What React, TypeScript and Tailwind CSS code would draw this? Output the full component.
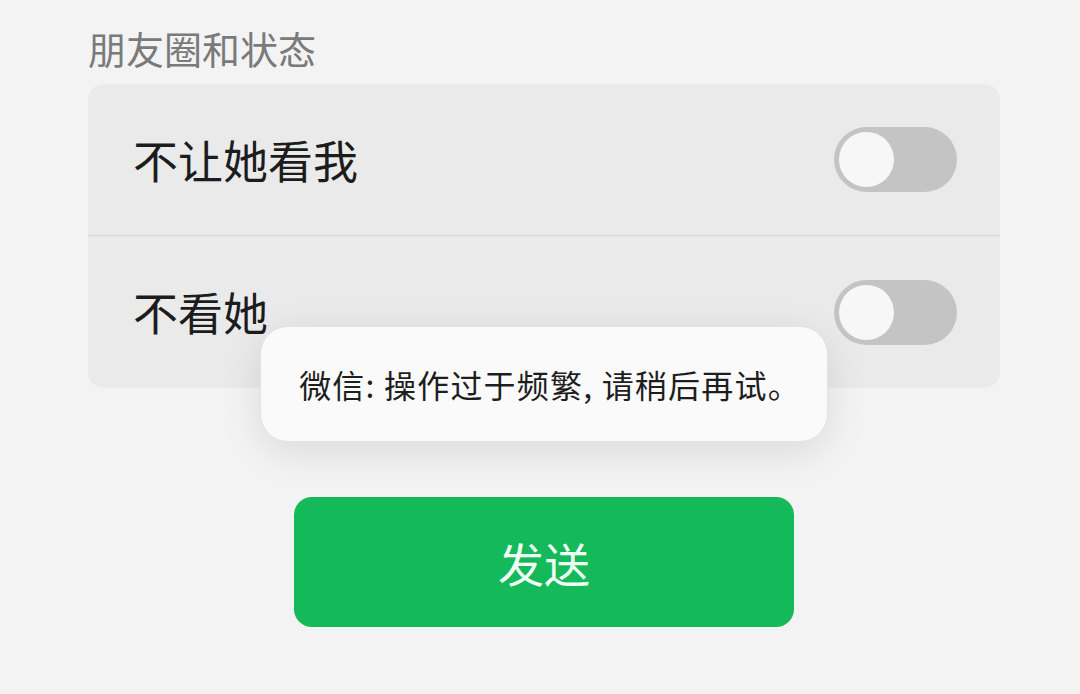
import React from "react";

const font = { fontFamily: '"Noto Sans CJK SC", "Noto Sans", sans-serif' };

const Toggle: React.FC = () => (
  <div className="flex h-[65px] w-[123px] items-center rounded-full bg-[#c4c4c4] px-[5px]">
    <div className="h-[55px] w-[55px] rounded-full bg-[#f7f7f7]" />
  </div>
);

const Row: React.FC<{ label: string; divider?: boolean }> = ({ label, divider }) => (
  <div
    className={
      "flex h-[152px] items-center justify-between pl-[45px] pr-[43px] " +
      (divider ? "border-b border-[#d6d6d6]" : "")
    }
  >
    <span className="text-[45px] leading-[52px] text-[#1c1c1c]">{label}</span>
    <Toggle />
  </div>
);

export default function App() {
  return (
    <div className="relative h-[694px] w-[1080px] overflow-hidden bg-[#f3f3f3]" style={font}>
      <div className="ml-[88px] w-[912px] pt-[26px]">
        <div className="text-[38px] leading-[44px] text-[#7a7a7a]">朋友圈和状态</div>
        <div className="mt-[14px] overflow-hidden rounded-[16px] bg-[#eaeaea]">
          <Row label="不让她看我" divider />
          <Row label="不看她" />
        </div>
        <button className="mx-auto mt-[109px] flex h-[130px] w-[500px] items-center justify-center rounded-[18px] bg-[#14b95a] text-[46px] text-[#f2fff6]">
          发送
        </button>
      </div>

      <div className="absolute left-[260px] top-[326px] flex h-[116px] w-[568px] items-center justify-center rounded-[28px] border border-[#e2e2e2] bg-[#fafafa] pl-[12px] shadow-[0_10px_40px_rgba(0,0,0,0.10)]">
        <span className="text-[32px] leading-[40px] tracking-[1.2px] text-[#1e1e1e]">微信: 操作过于频繁, 请稍后再试。</span>
      </div>
    </div>
  );
}
